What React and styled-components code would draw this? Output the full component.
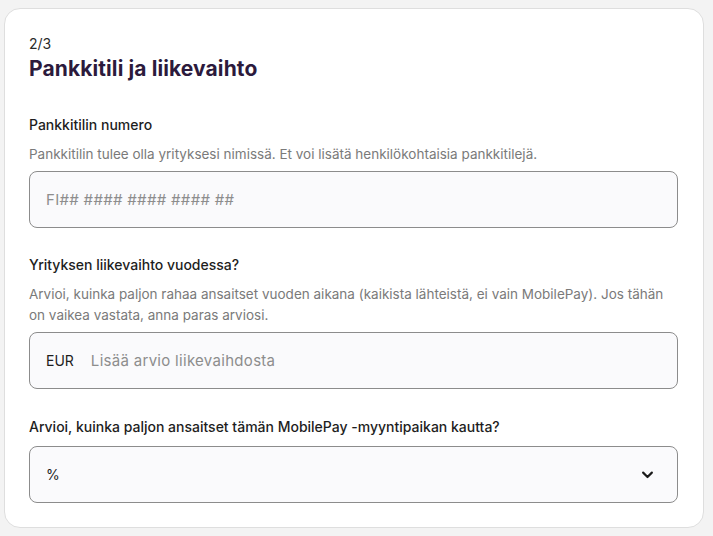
import React from "react";
import styled, { createGlobalStyle } from "styled-components";

const Global = createGlobalStyle`
  html, body { margin: 0; padding: 0; background: #f3f3f3; }
  body { font-family: Inter, "Noto Sans", sans-serif; -webkit-font-smoothing: antialiased; }
  * { box-sizing: border-box; }
`;

const Page = styled.div`
  padding: 8px 9px 9px 4px;
`;

const Card = styled.section`
  background: #fff;
  border: 1px solid #dedede;
  border-radius: 16px;
  padding: 26px 25px 24px 24px;
  display: flex;
  flex-direction: column;
`;

const Step = styled.div`
  font-size: 14px;
  line-height: 18px;
  color: #2a2a2a;
`;

const Title = styled.h1`
  margin: 2px 0 0;
  font-size: 21px;
  line-height: 27px;
  font-weight: 700;
  color: #2c1a3c;
  letter-spacing: 0.1px;
`;

const Field = styled.div`
  display: flex;
  flex-direction: column;
  margin-top: ${(p) => p.$mt}px;
`;

const Label = styled.label`
  font-size: 14px;
  line-height: 18px;
  font-weight: 500;
  color: #1e1e1e;
`;

const Help = styled.p`
  margin: 10px 0 0;
  font-size: 13.5px;
  line-height: 21px;
  color: #7a7a7a;
`;

const Box = styled.div`
  margin-top: ${(p) => p.$mt}px;
  height: 57px;
  border: 1px solid #8c8c8c;
  border-radius: 8px;
  background: #fafafc;
  display: flex;
  align-items: center;
  padding: 0 22px 0 16px;
  gap: 17px;
  font-size: 15px;
`;

const Placeholder = styled.span`
  color: #8d8d8d;
  flex: 1;
  letter-spacing: 0.3px;
`;

const Prefix = styled.span`
  color: #1e1e1e;
  font-size: 14px;
`;

const Value = styled.span`
  color: #1e1e1e;
  font-size: 14px;
  flex: 1;
`;

const Chevron = () => (
  <svg width="15" height="15" viewBox="0 0 24 24" fill="none" stroke="#1a1a1a" strokeWidth="3.4" strokeLinecap="round" strokeLinejoin="round">
    <path d="M5 9l7 7 7-7" />
  </svg>
);

export default function App() {
  return (
    <>
      <Global />
      <Page>
        <Card>
          <Step>2/3</Step>
          <Title>Pankkitili ja liikevaihto</Title>
          <Field $mt={34}>
            <Label>Pankkitilin numero</Label>
            <Help>Pankkitilin tulee olla yrityksesi nimissä. Et voi lisätä henkilökohtaisia pankkitilejä.</Help>
            <Box $mt={6}>
              <Placeholder>FI## #### #### #### ##</Placeholder>
            </Box>
          </Field>
          <Field $mt={28}>
            <Label>Yrityksen liikevaihto vuodessa?</Label>
            <Help>Arvioi, kuinka paljon rahaa ansaitset vuoden aikana (kaikista lähteistä, ei vain MobilePay). Jos tähän on vaikea vastata, anna paras arviosi.</Help>
            <Box $mt={6}>
              <Prefix>EUR</Prefix>
              <Placeholder>Lisää arvio liikevaihdosta</Placeholder>
            </Box>
          </Field>
          <Field $mt={29}>
            <Label>Arvioi, kuinka paljon ansaitset tämän MobilePay -myyntipaikan kautta?</Label>
            <Box $mt={10}>
              <Value>%</Value>
              <Chevron />
            </Box>
          </Field>
        </Card>
      </Page>
    </>
  );
}
